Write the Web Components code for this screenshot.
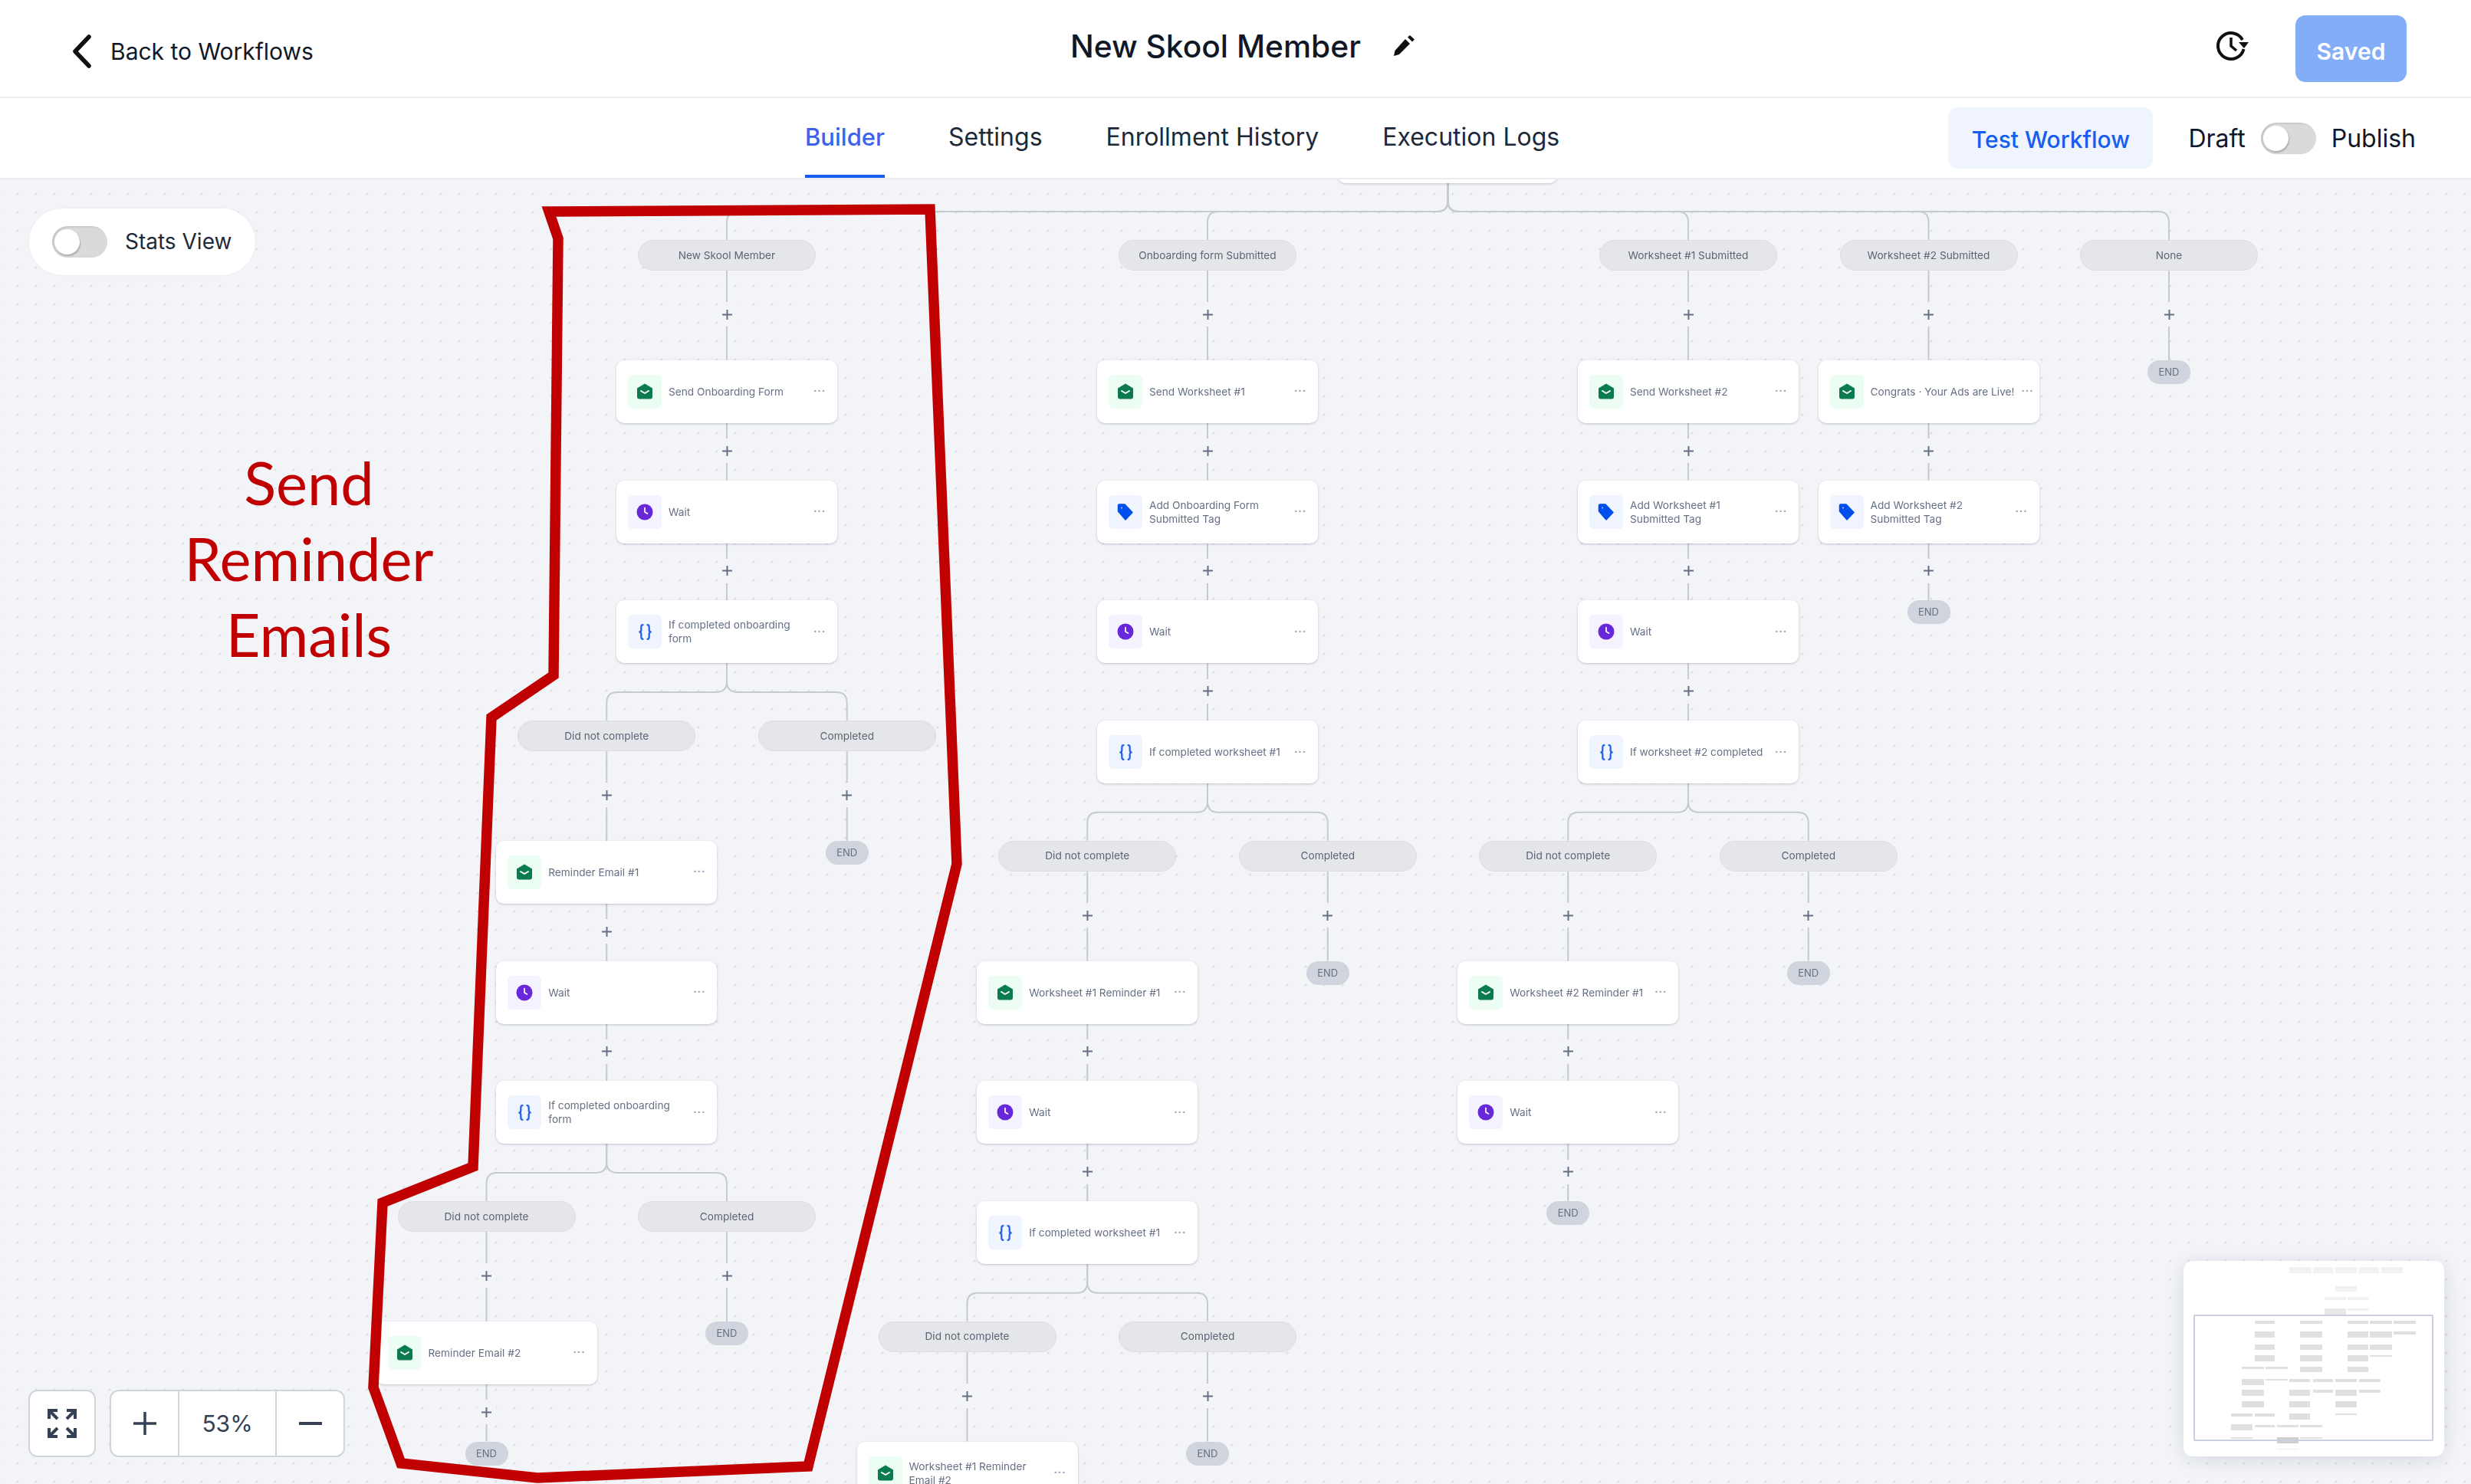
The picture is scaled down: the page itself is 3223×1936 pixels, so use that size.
<!DOCTYPE html>
<html lang="en">
<head>
<meta charset="utf-8">
<title>New Skool Member</title>
<style>
  html, body { margin: 0; height: 100%; overflow: hidden; background: #fff; }
  body { font-family: Inter, "Open Sans", sans-serif; color: #101828; }
</style>
</head>
<body>
<workflow-app></workflow-app>
<script>
const ICONS = {
  mail: { bg: "#ecfdf3", svg: `<svg width="22" height="22" viewBox="0 0 22 22"><path d="M11 .5 21 6.5V18a2.4 2.4 0 0 1-2.4 2.4H3.4A2.4 2.4 0 0 1 1 18V6.5Z" fill="#0b7a50"/><path d="M6 10l5 3 5-3" fill="none" stroke="#fff" stroke-width="2" stroke-linecap="round" stroke-linejoin="round"/></svg>` },
  wait: { bg: "#f4f3ff", svg: `<svg width="22" height="22" viewBox="0 0 22 22"><circle cx="11" cy="11" r="10.5" fill="#6927da"/><path d="M11 5.5V11l3.5 2" fill="none" stroke="#fff" stroke-width="1.7" stroke-linecap="round"/></svg>` },
  if: { bg: "#eff4ff", svg: `<svg width="19" height="21" viewBox="0 0 19 21"><path d="M6.500 1.200C4.300 1.200 4.300 2.800 4.300 4.500v3.500c0 1.600-.9 2.500-2.800 2.500 1.900 0 2.800.9 2.800 2.500v3.500c0 1.700 0 3.300 2.200 3.300M12.500 1.200c2.200 0 2.200 1.600 2.200 3.300v3.500c0 1.600.9 2.500 2.800 2.500-1.900 0-2.800.9-2.800 2.500v3.500c0 1.700 0 3.300-2.200 3.300" fill="none" stroke="#2563eb" stroke-width="2.300" stroke-linecap="round"/></svg>` },
  tag: { bg: "#eff4ff", svg: `<svg width="22" height="24" viewBox="0 0 22 24"><path d="M2.500 2H10l10 10.500L11 22 1.500 11V3Z" fill="#004eeb" stroke="#004eeb" stroke-width="1.500" stroke-linejoin="round"/><circle cx="6" cy="6.500" r="1" fill="#b2ccff"/></svg>` },
};

class WfToggle extends HTMLElement {
  constructor() {
    super();
    this.attachShadow({ mode: "open" });
    this.shadowRoot.innerHTML = `
      <style>
        :host { display: inline-block; width: 72px; height: 41px; }
        .track { display: flex; align-items: center; height: 100%; padding-left: 3px; box-sizing: border-box; border-radius: 21px; background: #dadada; box-shadow: inset 2px 1px 3px rgba(0,0,0,.12); }
        .knob { width: 33px; height: 33px; border-radius: 50%; background: #fff; box-shadow: 1px 2px 2px rgba(0,0,0,.22); }
      </style>
      <div class="track"><div class="knob"></div></div>`;
  }
}

class WfHeader extends HTMLElement {
  constructor() {
    super();
    this.attachShadow({ mode: "open" });
    this.shadowRoot.innerHTML = `
      <style>
        :host { display: flex; align-items: center; height: 126px; padding: 0 84px 0 92px; border-bottom: 2px solid #eaecf0; background: #fff; color: #101828; }
        .back { display: flex; align-items: center; gap: 24px; width: 1304px; font-size: 30px; margin-top: 8px; }
        .back svg { display: block; }
        .title { display: flex; align-items: center; gap: 41px; font-size: 40.7px; font-weight: 500; margin-top: -6px; flex: 1; }
        .history { display: block; margin-right: 60px; margin-top: -6px; }
        .saved { width: 145px; height: 87px; display: flex; align-items: center; justify-content: center; border-radius: 13px; background: #84adf7; color: #fff; font-size: 30px; font-weight: 600; padding-top: 8px; box-sizing: border-box; }
      </style>
      <div class="back">
        <svg width="28" height="44" viewBox="0 0 28 44"><path d="M24 3 6 22l18 19" fill="none" stroke="#101010" stroke-width="5.500" stroke-linecap="round" stroke-linejoin="round"/></svg>
        <span>Back to Workflows</span>
      </div>
      <div class="title">
        <span>New Skool Member</span>
        <svg width="30" height="30" viewBox="0 0 30 30"><path d="M2 28l1.500-7L17 6l6 6L9 26Z" fill="#101010"/><path d="M20 3.500 23 1l6 5.500-3 3Z" fill="#101010"/></svg>
      </div>
      <svg class="history" width="44" height="42" viewBox="0 0 44 42"><path d="M36.500 25A17 17 0 1 1 35 13" fill="none" stroke="#101010" stroke-width="4"/><path d="M20 10V21l7 6" fill="none" stroke="#101010" stroke-width="3.500"/><path d="M43 16 37 24l-7-8Z" fill="#101010"/></svg>
      <div class="saved">Saved</div>`;
  }
}

class WfTabs extends HTMLElement {
  constructor() {
    super();
    this.attachShadow({ mode: "open" });
    this.shadowRoot.innerHTML = `
      <style>
        :host { display: flex; align-items: stretch; height: 104px; padding: 0 72px 0 1050px; border-bottom: 2px solid #eaecf0; background: #fff; font-size: 32px; color: #1d2939; box-sizing: content-box; }
        nav { display: flex; gap: 83px; flex: 1; }
        a { display: flex; align-items: center; border-bottom: 4px solid transparent; }
        a.on { color: #3a62ee; border-color: #155eef; font-weight: 500; font-size: 31px; }
        .right { display: flex; align-items: center; gap: 20px; color: #101828; }
        .test { display: flex; align-items: center; justify-content: center; width: 267px; height: 80px; margin-right: 26px; border-radius: 13px; background: #eff4ff; color: #155eef; font-size: 30px; font-weight: 500; padding-top: 4px; box-sizing: border-box; }
      </style>
      <nav>
        <a class="on">Builder</a>
        <a>Settings</a>
        <a>Enrollment History</a>
        <a>Execution Logs</a>
      </nav>
      <div class="right">
        <div class="test">Test Workflow</div>
        <span>Draft</span>
        <wf-toggle></wf-toggle>
        <span>Publish</span>
      </div>`;
  }
}

class WfNode extends HTMLElement {
  constructor() {
    super();
    this.attachShadow({ mode: "open" });
  }
  connectedCallback() {
    const icon = ICONS[this.getAttribute("kind")] || ICONS.mail;
    this.shadowRoot.innerHTML = `
      <style>
        :host { display: flex; align-items: center; gap: 9px; width: 288px; height: 82px; padding: 0 15px 0 15px; box-sizing: border-box; background: #fff; border-radius: 10px; box-shadow: 0 1px 3px rgba(16,24,40,.22); font-size: 13.7px; line-height: 18px; color: #667085; }
        .tile { flex: none; display: flex; align-items: center; justify-content: center; width: 44px; height: 44px; border-radius: 6px; background: ${icon.bg}; filter: blur(.3px); }
        .text { flex: 1; white-space: pre; filter: blur(.4px); }
        .more { flex: none; letter-spacing: 1px; font-weight: 700; font-size: 13px; color: #98a2b3; margin-top: -3px; }
      </style>
      <div class="tile">${icon.svg}</div>
      <div class="text"><slot></slot></div>
      <div class="more">···</div>`;
  }
}

class WfPill extends HTMLElement {
  constructor() {
    super();
    this.attachShadow({ mode: "open" });
    this.shadowRoot.innerHTML = `
      <style>
        :host { display: flex; align-items: center; justify-content: center; width: 232px; height: 40px; box-sizing: border-box; border-radius: 20px; background: #e5e6ea; border: 1px solid #dcdee3; font-size: 13.7px; color: #5c6474; white-space: nowrap; }
        span { filter: blur(.4px); margin-top: -1px; }
      </style>
      <span><slot></slot></span>`;
  }
}

class WfEnd extends HTMLElement {
  constructor() {
    super();
    this.attachShadow({ mode: "open" });
    this.shadowRoot.innerHTML = `
      <style>
        :host { display: flex; align-items: center; justify-content: center; width: 56px; height: 31px; border-radius: 16px; background: #d0d5dd; font-size: 13px; color: #667085; }
        span { filter: blur(.3px); margin-top: -1px; }
      </style>
      <span><slot></slot></span>`;
  }
}

class WfPlus extends HTMLElement {
  constructor() {
    super();
    this.attachShadow({ mode: "open" });
    this.shadowRoot.innerHTML = `
      <style>
        :host { display: flex; align-items: center; justify-content: center; width: 24px; height: 32px; background: #f2f4f8; }
      </style>
      <svg width="13" height="13" viewBox="0 0 13 13"><path d="M6.500 0v13M0 6.500h13" stroke="#667085" stroke-width="2"/></svg>`;
  }
}

class WfMinimap extends HTMLElement {
  constructor() {
    super();
    this.attachShadow({ mode: "open" });
    // rects measured from the minimap, in 1/3 px: x, x2, y, y2, colour
    const L = "#f2f2f2", D = "#e0e0e0";
    const rects = [
      [560,645,157,180,L],[652,731,157,180,L],[739,824,157,180,L],[831,911,157,180,L],[918,1003,157,180,L],
      [739,824,232,254,L],[696,781,275,285,L],[788,867,275,285,L],[696,781,318,342,"#e8e8e8"],[788,867,318,328,L],
      [423,503,367,378,D],[602,688,367,378,D],[787,867,367,378,D],[874,960,367,378,D],[967,1053,367,378,D],
      [423,503,410,433,D],[602,688,410,433,D],[787,867,410,433,D],[874,960,410,433,D],[967,1053,410,421,D],
      [423,503,459,482,D],[602,688,459,482,D],[787,867,459,482,D],[874,960,459,482,D],
      [423,503,503,525,D],[602,688,503,525,D],[787,867,503,525,D],[874,960,502,507,D],
      [602,688,546,569,D],[787,867,546,569,D],[374,460,546,557,D],[467,552,546,557,D],
      [374,460,595,618,D],[467,552,595,600,D],[559,639,595,606,D],[652,731,595,606,D],[739,824,595,606,D],[831,917,595,606,D],
      [374,460,638,661,D],[559,639,638,661,D],[739,824,638,661,D],[652,731,638,649,D],[831,917,638,649,D],
      [374,460,682,705,D],[559,639,682,705,D],[739,824,682,705,D],
      [559,639,730,753,D],[331,416,731,742,D],[423,503,731,742,D],[739,824,731,736,D],
      [331,416,773,797,D],[423,503,774,785,D],[510,595,774,785,D],[602,688,774,785,D],
      [331,416,823,830,D],[510,595,824,846,"#cfcfcf"],[602,688,824,830,D],[510,595,867,872,"#ececec"],
    ];
    const bars = rects
      .map(([x, x2, y, y2, c]) => `<i style="left:${(x - 145) / 3}px;top:${(y - 133) / 3}px;width:${(x2 - x) / 3}px;height:${(y2 - y) / 3}px;background:${c}"></i>`)
      .join("");
    this.shadowRoot.innerHTML = `
      <style>
        :host { display: block; position: relative; width: 340px; height: 255px; background: #fff; border-radius: 12px; box-shadow: 0 4px 24px rgba(16,24,40,.12); }
        i { position: absolute; display: block; filter: blur(.5px); }
        .view { position: absolute; left: 13px; top: 70px; width: 313px; height: 165px; box-sizing: border-box; border: 2px solid #c9cfdf; border-radius: 2px; }
      </style>
      ${bars}
      <div class="view"></div>`;
  }
}

class WfControls extends HTMLElement {
  constructor() {
    super();
    this.attachShadow({ mode: "open" });
    this.shadowRoot.innerHTML = `
      <style>
        :host { display: flex; gap: 18px; }
        .box { display: flex; height: 88px; box-sizing: border-box; background: #fff; border: 2px solid #d0d5dd; border-radius: 12px; color: #344054; font-size: 30px; }
        .cell { display: flex; align-items: center; justify-content: center; }
        .cell + .cell { border-left: 2px solid #d0d5dd; }
      </style>
      <div class="box">
        <div class="cell" style="width:84px">
          <svg width="40" height="40" viewBox="0 0 40 40" fill="none" stroke="#344054" stroke-width="4"><path d="M3 14V3h11M3 3l11 11M37 14V3H26M37 3 26 14M3 26v11h11M3 37l11-11M37 26v11H26M37 37 26 26"/></svg>
        </div>
      </div>
      <div class="box">
        <div class="cell" style="width:87px">
          <svg width="32" height="32" viewBox="0 0 32 32"><path d="M16 1v30M1 16h30" stroke="#344054" stroke-width="3.500"/></svg>
        </div>
        <div class="cell" style="width:125px">53%</div>
        <div class="cell" style="width:87px">
          <svg width="32" height="6" viewBox="0 0 32 6"><path d="M1 3h30" stroke="#344054" stroke-width="4"/></svg>
        </div>
      </div>`;
  }
}

// vertical grid of the diagram, in page pixels
const UNIT = 156.75;
const ROW = (n) => 312 + 156.75 * n;
const HEIGHTS = { pill: 40, end: 31, mail: 82, wait: 82, if: 82, tag: 82 };

const FLOWS = [
  { x: 948, steps: [
    ["pill", "New Skool Member"], ["mail", "Send Onboarding Form"], ["wait", "Wait"], ["if", "If completed onboarding\nform"],
    { split: [
      [["pill", "Did not complete"], ["mail", "Reminder Email #1"], ["wait", "Wait"], ["if", "If completed onboarding\nform"],
        { split: [
          [["pill", "Did not complete"], ["mail", "Reminder Email #2"], ["end"]],
          [["pill", "Completed"], ["end"]],
        ] }],
      [["pill", "Completed"], ["end"]],
    ] },
  ] },
  { x: 1575, steps: [
    ["pill", "Onboarding form Submitted"], ["mail", "Send Worksheet #1"], ["tag", "Add Onboarding Form\nSubmitted Tag"], ["wait", "Wait"], ["if", "If completed worksheet #1"],
    { split: [
      [["pill", "Did not complete"], ["mail", "Worksheet #1 Reminder #1"], ["wait", "Wait"], ["if", "If completed worksheet #1"],
        { split: [
          [["pill", "Did not complete"], ["mail", "Worksheet #1 Reminder\nEmail #2"]],
          [["pill", "Completed"], ["end"]],
        ] }],
      [["pill", "Completed"], ["end"]],
    ] },
  ] },
  { x: 2202, steps: [
    ["pill", "Worksheet #1 Submitted"], ["mail", "Send Worksheet #2"], ["tag", "Add Worksheet #1\nSubmitted Tag"], ["wait", "Wait"], ["if", "If worksheet #2 completed"],
    { split: [
      [["pill", "Did not complete"], ["mail", "Worksheet #2 Reminder #1"], ["wait", "Wait"], ["end"]],
      [["pill", "Completed"], ["end"]],
    ] },
  ] },
  { x: 2515.5, steps: [
    ["pill", "Worksheet #2 Submitted"], ["mail", "Congrats · Your Ads are Live!"], ["tag", "Add Worksheet #2\nSubmitted Tag"], ["end"],
  ] },
  { x: 2829, steps: [["pill", "None"], ["end"]] },
];

class WfCanvas extends HTMLElement {
  constructor() {
    super();
    this.attachShadow({ mode: "open" });
    this.top = 233;
    this.paths = [];
    this.items = [];
  }

  connectedCallback() {
    FLOWS.forEach((f) => {
      this.paths.push(this.branchPath(1888.5, ROW(-1) + 82, f.x, ROW(0)));
      this.walk(f.x, 0, f.steps, null);
    });
    this.render();
  }

  branchPath(px, py, cx, cy) {
    const bus = cy - 37;
    const r = 14;
    const d = cx < px ? -1 : 1;
    return `M${px} ${py}V${bus - r}Q${px} ${bus} ${px + d * r} ${bus}H${cx - d * r}Q${cx} ${bus} ${cx} ${bus + r}V${cy}`;
  }

  place(tag, text, cx, top, width, kind) {
    const attr = kind ? ` kind="${kind}"` : "";
    const left = cx - width / 2;
    this.items.push(`<${tag}${attr} style="position:absolute;left:${left}px;top:${top - this.top}px">${text}</${tag}>`);
  }

  walk(x, row, steps, prevBottom) {
    let bottom = prevBottom;
    steps.forEach((step) => {
      if (step.split) {
        const dirs = [-1, 1];
        step.split.forEach((sub, i) => {
          const cx = x + dirs[i] * UNIT;
          this.paths.push(this.branchPath(x, bottom, cx, ROW(row)));
          this.walk(cx, row, sub, null);
        });
        return;
      }
      const [kind, label] = step;
      const top = ROW(row);
      if (bottom !== null) {
        this.paths.push(`M${x} ${bottom}V${top}`);
        const mid = (bottom + top) / 2 - 1;
        this.items.push(`<wf-plus style="position:absolute;left:${x - 12}px;top:${mid - 16 - this.top}px"></wf-plus>`);
      }
      if (kind === "pill") this.place("wf-pill", label, x, top, 232);
      else if (kind === "end") this.place("wf-end", "END", x, top, 56);
      else this.place("wf-node", label, x, top, 288, kind);
      bottom = top + HEIGHTS[kind];
      row += 1;
    });
  }

  render() {
    const lines = this.paths.map((d) => `<path d="${d}"/>`).join("");
    this.shadowRoot.innerHTML = `
      <style>
        :host { display: block; position: relative; height: 1702px; overflow: hidden; background-color: #f2f4f8; background-image: radial-gradient(circle at center, #dfe1e6 1.3px, transparent 1.9px); background-size: 24px 24px; background-position: 11px 7px; }
        svg.wires { position: absolute; left: 0; top: -233px; width: 3223px; height: 1936px; }
        .root { position: absolute; left: 1745px; top: -78px; width: 286px; height: 83px; background: #fff; border-radius: 10px; box-shadow: 0 1px 3px rgba(16,24,40,.22); }
        .stats { position: absolute; left: 38px; top: 38px; display: flex; align-items: center; gap: 23px; width: 295px; height: 87px; padding-left: 30px; box-sizing: border-box; border-radius: 44px; background: #fff; box-shadow: 0 0 3px rgba(16,24,40,.06); font-size: 28px; color: #1d2939; }
        .stats span { margin-top: -2px; }
        wf-controls { position: absolute; left: 37px; top: 1579px; }
        wf-minimap { position: absolute; left: 2848px; top: 1411px; }
        .mark { position: absolute; left: 0; top: -233px; width: 3223px; height: 1936px; pointer-events: none; }
        .note { position: absolute; left: 203px; top: 346px; width: 400px; text-align: center; font-family: Lato, "Open Sans", sans-serif; font-size: 77.5px; line-height: 99px; color: #c00000; }
      </style>
      <svg class="wires" viewBox="0 0 3223 1936" fill="none" stroke="#c6c9d1" stroke-width="2">${lines}</svg>
      <div class="root"></div>
      ${this.items.join("")}
      <div class="stats"><wf-toggle></wf-toggle><span>Stats View</span></div>
      <wf-controls></wf-controls>
      <wf-minimap></wf-minimap>
      <svg class="mark" viewBox="0 0 3223 1936" fill="none" stroke="#c00000" stroke-width="13.500" stroke-linejoin="miter">
        <path d="M716 275 1213 272 1248 1126 1054 1912 701 1927 523 1908 487 1809 499 1568 617 1521 641 935 722 880 728 310Z"/>
      </svg>
      <div class="note">Send<br>Reminder<br>Emails</div>`;
  }
}

class WorkflowApp extends HTMLElement {
  constructor() {
    super();
    this.attachShadow({ mode: "open" });
    this.shadowRoot.innerHTML = `
      <style>
        :host { display: block; width: 3223px; height: 1936px; overflow: hidden; }
      </style>
      <wf-header></wf-header>
      <wf-tabs></wf-tabs>
      <wf-canvas></wf-canvas>`;
  }
}

customElements.define("wf-toggle", WfToggle);
customElements.define("wf-header", WfHeader);
customElements.define("wf-tabs", WfTabs);
customElements.define("wf-node", WfNode);
customElements.define("wf-pill", WfPill);
customElements.define("wf-end", WfEnd);
customElements.define("wf-plus", WfPlus);
customElements.define("wf-minimap", WfMinimap);
customElements.define("wf-controls", WfControls);
customElements.define("wf-canvas", WfCanvas);
customElements.define("workflow-app", WorkflowApp);
</script>
</body>
</html>
